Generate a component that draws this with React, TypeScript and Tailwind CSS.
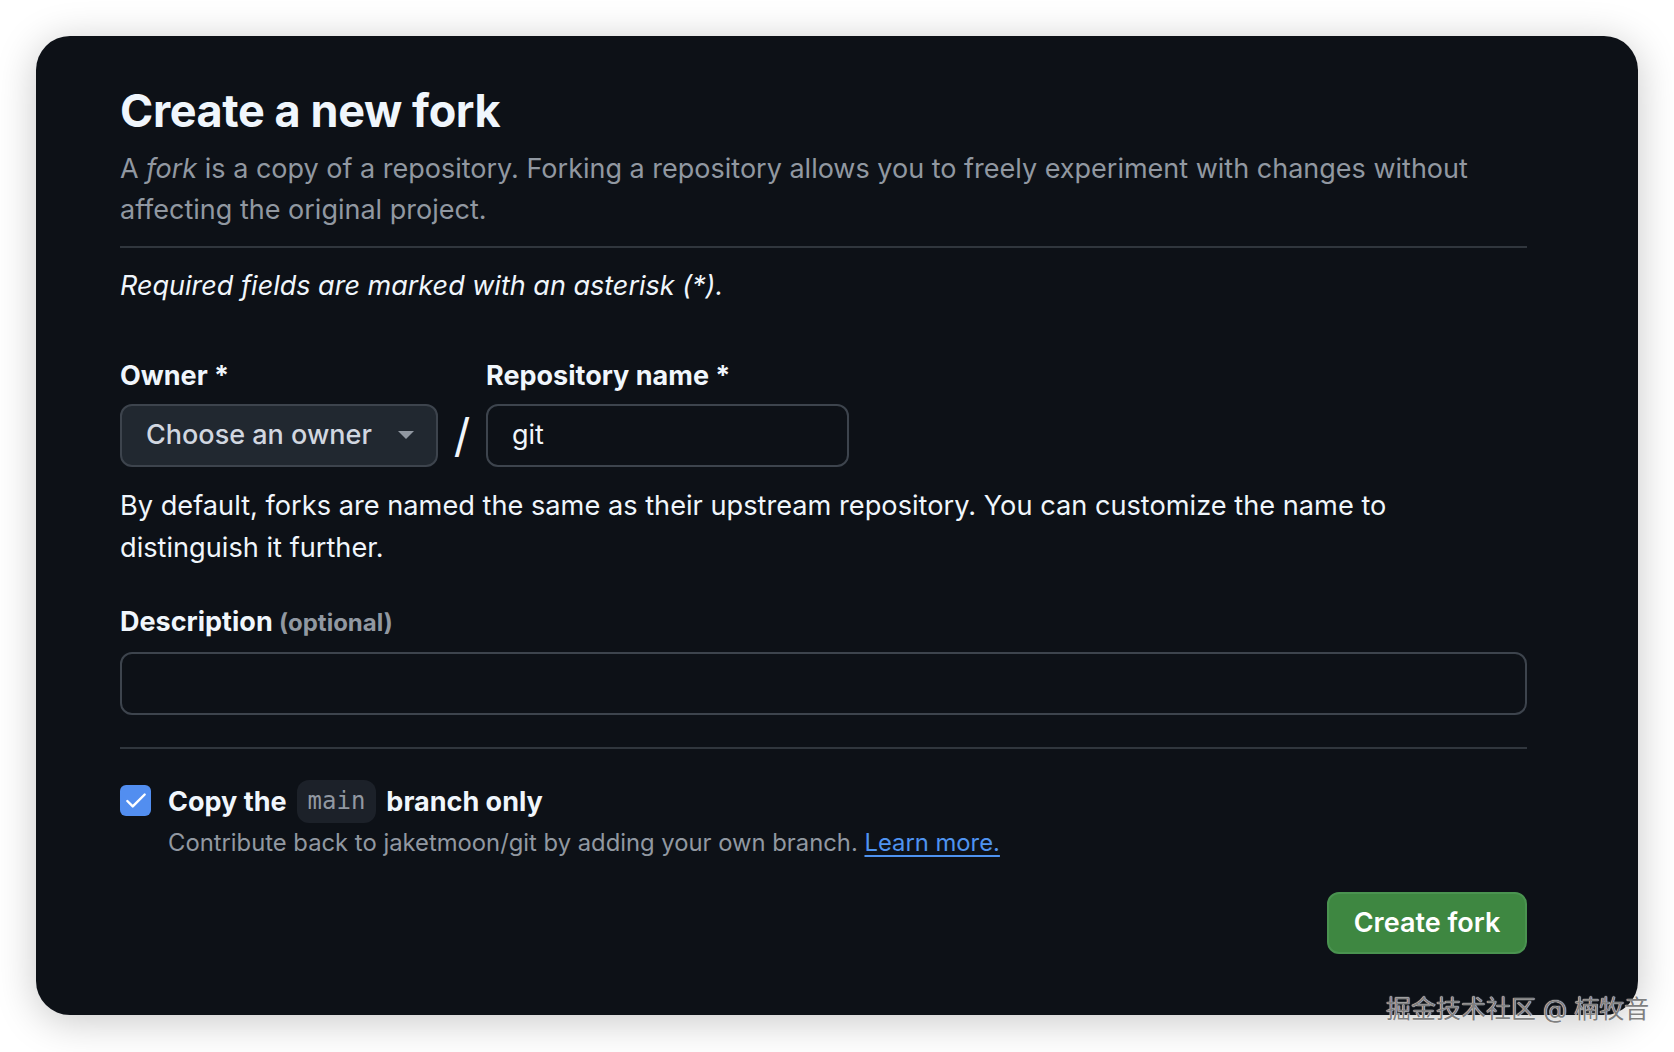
import { Check } from "lucide-react";

const App = () => {
  return (
    <div className="relative min-h-screen bg-white p-[36px] font-['Inter','Noto_Sans_CJK_SC',sans-serif]">
      {/* Card */}
      <div className="w-[1602px] h-[979px] rounded-[34px] bg-[#0d1117] shadow-[0_6px_40px_rgba(0,0,0,0.22)] pl-[84px] pt-[46px]">
        <div className="w-[1407px]">
          <h1 className="text-[45px] leading-[57.5px] font-bold text-[#f0f6fc] tracking-[-0.4px]">
            Create a new fork
          </h1>
          <p className="mt-[8px] text-[27px] leading-[41.6px] text-[#9198a1]">
            A <em>fork</em> is a copy of a repository. Forking a repository allows you to freely experiment with changes without
            <br />
            affecting the original project.
          </p>

          <div className="mt-[15px] h-[2px] bg-[#30363d]" />

          <p className="mt-[17px] text-[27px] leading-[41.6px] italic text-[#f0f6fc]">
            Required fields are marked with an asterisk (*).
          </p>

          {/* Owner / repo */}
          <div className="mt-[49px] flex items-end">
            <div className="flex flex-col">
              <label className="text-[27px] leading-[41.6px] font-bold text-[#f0f6fc]">Owner *</label>
              <div className="mt-[7px] w-[318px] h-[63px] rounded-[12px] border-2 border-[#3d444d] bg-[#212830] flex items-center justify-between pl-[24px] pr-[22px]">
                <span className="text-[27px] font-medium text-[#d1d7e0]">Choose an owner</span>
                <svg width="16" height="9" viewBox="0 0 16 9">
                  <path d="M0 0 L16 0 L8 8 Z" fill="#9198a1" />
                </svg>
              </div>
            </div>
            <div className="w-[48px] h-[63px] flex items-center justify-center text-[46px] text-[#f0f6fc]">/</div>
            <div className="flex flex-col">
              <label className="text-[27px] leading-[41.6px] font-bold text-[#f0f6fc]">Repository name *</label>
              <div className="mt-[7px] w-[363px] h-[63px] rounded-[12px] border-2 border-[#3d444d] bg-[#0d1117] flex items-center pl-[24px]">
                <span className="text-[27px] text-[#f0f6fc]">git</span>
              </div>
            </div>
          </div>

          <p className="mt-[18px] text-[27.2px] leading-[42px] text-[#f0f6fc]">
            By default, forks are named the same as their upstream repository. You can customize the name to
            <br />
            distinguish it further.
          </p>

          {/* Description */}
          <div className="mt-[32px] text-[27px] leading-[41.6px] font-bold text-[#f0f6fc]">
            Description <span className="text-[24px] font-bold text-[#9198a1]">(optional)</span>
          </div>
          <div className="mt-[9px] h-[63px] rounded-[12px] border-2 border-[#3d444d] bg-[#0d1117]" />

          <div className="mt-[32px] h-[2px] bg-[#30363d]" />

          {/* Copy main branch only */}
          <div className="mt-[31px] flex items-start">
            <div className="mt-[5px] w-[31px] h-[31px] rounded-[6px] bg-[#528ef0] flex items-center justify-center">
              <Check className="w-[26px] h-[26px] text-white" strokeWidth={2.25} />
            </div>
            <div className="ml-[17px] flex flex-col">
              <div className="flex items-center text-[27px] leading-[41.6px] font-bold text-[#f0f6fc]">
                <span>Copy the</span>
                <span className="mx-[10px] h-[43px] px-[11px] flex items-center rounded-[12px] bg-[#1c2129] font-['DejaVu_Sans_Mono',monospace] font-normal text-[24px] text-[#9198a1]">
                  main
                </span>
                <span>branch only</span>
              </div>
              <p className="text-[23.8px] leading-[40px] text-[#9198a1]">
                Contribute back to jaketmoon/git by adding your own branch.{" "}
                <a className="text-[#4f93f0] underline underline-offset-[4px]">Learn more.</a>
              </p>
            </div>
          </div>

          <div className="mt-[29px] flex justify-end">
            <button className="w-[200px] h-[62px] rounded-[12px] bg-[#3e8741] border-2 border-[#4a9350] text-[27px] font-semibold text-white">
              Create fork
            </button>
          </div>
        </div>
      </div>

      {/* watermark */}
      <div className="absolute left-[1386px] top-[992px] text-[25px] leading-[34px] text-[#808080] [text-shadow:0_0_1px_#fff,0_0_1px_#fff]">
        掘金技术社区 @ 楠牧音
      </div>
    </div>
  );
};

export default App;
